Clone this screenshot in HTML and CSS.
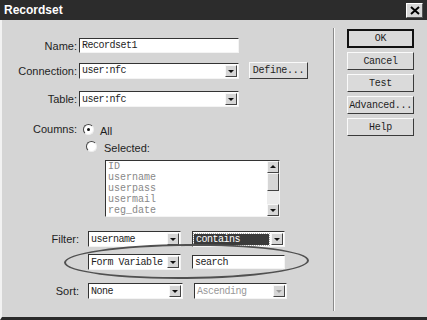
FILE: index.html
```html
<!DOCTYPE html>
<html lang="en">
<head>
    <meta charset="UTF-8">
    <title>Recordset</title>
    <link rel="stylesheet" href="styles.css">
</head>
<body>
    <div class="window">
        <div class="titlebar">
            <span class="title">Recordset</span>
            <span class="close">
                <svg width="10" height="9" viewBox="0 0 10 9"><path d="M1 1 L9 8 M9 1 L1 8" stroke="#000" stroke-width="2"/></svg>
            </span>
        </div>
        <div class="body">
            <div class="form">
                <div class="row r-name">
                    <span class="lbl">Name:</span>
                    <div class="field w-name">Recordset1</div>
                </div>
                <div class="row r-conn">
                    <span class="lbl">Connection:</span>
                    <div class="select w-name"><span class="val">user:nfc</span><span class="drop"></span></div>
                    <div class="btn define">Define...</div>
                </div>
                <div class="row r-table">
                    <span class="lbl">Table:</span>
                    <div class="select w-name"><span class="val">user:nfc</span><span class="drop"></span></div>
                </div>
                <div class="row r-cols">
                    <span class="lbl">Coumns:</span>
                    <span class="radio on"></span>
                    <span class="opt">All</span>
                </div>
                <div class="row r-sel">
                    <span class="radio sel"></span>
                    <span class="opt">Selected:</span>
                </div>
                <div class="listbox">
                    <div class="items">
                        <div>ID</div>
                        <div>username</div>
                        <div>userpass</div>
                        <div>usermail</div>
                        <div>reg_date</div>
                    </div>
                    <div class="scroll">
                        <span class="arrow up"></span>
                        <span class="thumb"></span>
                        <span class="track"></span>
                        <span class="arrow"></span>
                    </div>
                </div>
                <div class="row r-filter">
                    <span class="lbl lbl-low">Filter:</span>
                    <div class="select w-small"><span class="val">username</span><span class="drop"></span></div>
                    <div class="select w-small right"><span class="val picked">contains</span><span class="drop"></span></div>
                </div>
                <div class="row r-var">
                    <span class="lbl lbl-low"></span>
                    <div class="select w-small"><span class="val">Form Variable</span><span class="drop"></span></div>
                    <div class="field w-small right">search</div>
                </div>
                <div class="row r-sort">
                    <span class="lbl lbl-low">Sort:</span>
                    <div class="select w-sort"><span class="val">None</span><span class="drop"></span></div>
                    <div class="select w-small right off"><span class="val">Ascending</span><span class="drop"></span></div>
                </div>
                <div class="ring"></div>
            </div>
            <div class="sep"></div>
            <div class="buttons">
                <div class="btn default">OK</div>
                <div class="btn">Cancel</div>
                <div class="btn">Test</div>
                <div class="btn">Advanced...</div>
                <div class="btn">Help</div>
            </div>
        </div>
    </div>
</body>
</html>
```

FILE: styles.css
```css
body {
    margin: 0;
    background: #d5d5d5;
    font-family: "Liberation Sans", Arial, sans-serif;
    font-size: 11px;
    color: #1e1e1e;
}
.window {
    width: 425px;
    height: 317px;
    border-left: 2px solid #f2f2f2;
    border-bottom: 3px solid #2a2a2a;
    background: #d5d5d5;
}
.titlebar {
    height: 20px;
    background: #2c2c2c;
    display: flex;
    align-items: center;
    justify-content: space-between;
    margin-left: -2px;
    padding: 0 4px 0 4px;
}
.title {
    color: #fff;
    font-weight: bold;
    font-size: 12px;
}
.close {
    width: 15px;
    height: 13px;
    background: #d8d8d8;
    border: 1px solid;
    border-color: #fff #555 #555 #fff;
    display: flex;
    align-items: center;
    justify-content: center;
}
.body {
    display: flex;
    height: 297px;
}
.form {
    width: 331px;
    position: relative;
}
.sep {
    width: 1px;
    border-right: 1px solid #fafafa;
    background: #8a8a8a;
    margin: 8px 0 6px 0;
}
.buttons {
    padding: 9px 0 0 12px;
    display: flex;
    flex-direction: column;
    gap: 4px;
}
.btn {
    width: 65px;
    height: 16px;
    background: #dadada;
    border: 1px solid;
    border-color: #fafafa #3a3a3a #3a3a3a #fafafa;
    font-family: "Liberation Mono", monospace;
    font-size: 10px;
    letter-spacing: -0.3px;
    display: flex;
    align-items: center;
    justify-content: center;
}
.btn.default {
    border: 2px solid #111;
    width: 63px;
    height: 15px;
}
.btn.define {
    width: 57px;
    margin-left: 10px;
    height: 15px;
}
.row {
    display: flex;
    align-items: center;
}
.lbl {
    width: 75px;
    margin-right: 2px;
    text-align: right;
}
.lbl.lbl-low {
    width: 77px;
    margin-right: 9px;
}
.r-name { margin-top: 18px; }
.r-conn { margin-top: 9px; }
.r-table { margin-top: 12px; }
.r-cols { margin-top: 15px; height: 14px; }
.r-sel { margin-top: 3px; height: 14px; padding-left: 84px; }
.r-filter { margin-top: 14px; }
.r-var { margin-top: 7px; }
.r-sort { margin-top: 13px; }
.field, .select {
    height: 14px;
    background: #fff;
    border: 1px solid;
    border-color: #333 #f4f4f4 #f4f4f4 #333;
    font-family: "Liberation Mono", monospace;
    font-size: 10px;
    letter-spacing: -0.5px;
    display: flex;
    align-items: center;
    box-sizing: border-box;
}
.field {
    padding-left: 2px;
}
.select {
    height: 16px;
}
.w-name { width: 160px; }
.r-name .w-name { height: 15px; }
.w-small { width: 93px; }
.w-sort { width: 95px; }
.right { margin-left: 11px; }
.val {
    flex: 1;
    padding-left: 2px;
    white-space: nowrap;
    overflow: hidden;
}
.val.picked {
    background: #3a3a3a;
    color: #fff;
    outline: 1px dotted #aaa;
    margin: 1px 2px 1px 1px;
    height: 11px;
    line-height: 11px;
}
.drop, .arrow {
    width: 12px;
    height: 12px;
    margin-right: 1px;
    background: #d6d6d6;
    border: 1px solid;
    border-color: #f8f8f8 #444 #444 #f8f8f8;
    box-sizing: border-box;
    position: relative;
}
.drop::after, .arrow::after {
    content: "";
    position: absolute;
    left: 2px;
    top: 4px;
    border-left: 3px solid transparent;
    border-right: 3px solid transparent;
    border-top: 3px solid #111;
}
.arrow.up::after {
    border-top: none;
    border-bottom: 3px solid #111;
    top: 3px;
}
.off .val { color: #999; }
.off .drop::after { border-top-color: #999; }
.radio {
    width: 9px;
    height: 9px;
    border-radius: 50%;
    background: #fff;
    border: 1px solid;
    border-color: #444 #eee #eee #444;
    margin-left: 4px;
    margin-right: 6px;
    position: relative;
}
.radio.on::after {
    content: "";
    position: absolute;
    left: 3px;
    top: 3px;
    width: 3px;
    height: 3px;
    border-radius: 50%;
    background: #111;
}
.radio.sel { margin-left: 0; margin-right: 7px; }
.opt {
    padding-top: 3px;
}
.listbox {
    margin: 7px 0 0 103px;
    width: 175px;
    height: 57px;
    background: #fff;
    border: 1px solid;
    border-color: #333 #f4f4f4 #f4f4f4 #333;
    box-sizing: border-box;
    display: flex;
}
.items {
    flex: 1;
    font-family: "Liberation Mono", monospace;
    font-size: 10px;
    line-height: 11px;
    color: #888;
    padding-left: 2px;
}
.scroll {
    width: 12px;
    display: flex;
    flex-direction: column;
    background: #ececec;
}
.scroll .arrow { margin: 0; }
.thumb {
    height: 18px;
    background: #d6d6d6;
    border: 1px solid;
    border-color: #f8f8f8 #444 #444 #f8f8f8;
    box-sizing: border-box;
}
.track { flex: 1; }
.ring {
    position: absolute;
    left: 62px;
    top: 224px;
    width: 241px;
    height: 31px;
    border: 2px solid #505050;
    border-radius: 50%;
    transform: rotate(-0.5deg);
}
```
